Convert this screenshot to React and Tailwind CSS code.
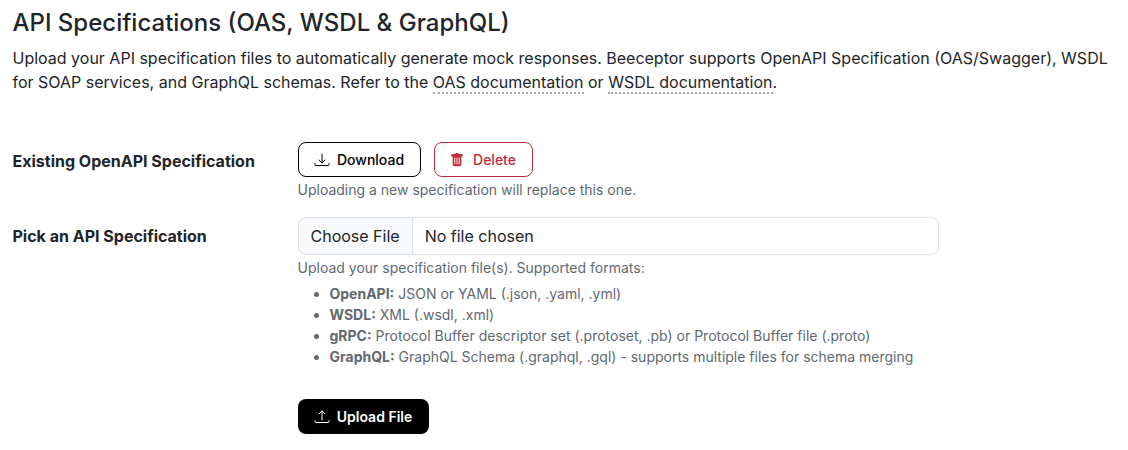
import React from "react";

function DownloadIcon() {
  return (
    <svg width="16" height="16" viewBox="0 0 16 16" fill="none" stroke="currentColor" strokeWidth="1" strokeLinecap="round" strokeLinejoin="round">
      <path d="M8 2v9M5 8l3 3 3-3" />
      <path d="M1 11.5v1a1 1 0 0 0 1 1h12a1 1 0 0 0 1-1v-1" />
    </svg>
  );
}

function UploadIcon() {
  return (
    <svg width="16" height="16" viewBox="0 0 16 16" fill="none" stroke="currentColor" strokeWidth="1" strokeLinecap="round" strokeLinejoin="round">
      <path d="M8 11V2M5 5l3-3 3 3" />
      <path d="M1 11.5v1a1 1 0 0 0 1 1h12a1 1 0 0 0 1-1v-1" />
    </svg>
  );
}

function TrashIcon() {
  return (
    <svg width="14" height="14" viewBox="0 0 16 16" fill="currentColor">
      <path d="M2.5 1a1 1 0 0 0-1 1v1a1 1 0 0 0 1 1H3v9a2 2 0 0 0 2 2h6a2 2 0 0 0 2-2V4h.5a1 1 0 0 0 1-1V2a1 1 0 0 0-1-1H10a1 1 0 0 0-1-1H7a1 1 0 0 0-1 1H2.5zm3 4a.5.5 0 0 1 .5.5v7a.5.5 0 0 1-1 0v-7a.5.5 0 0 1 .5-.5zM8 5a.5.5 0 0 1 .5.5v7a.5.5 0 0 1-1 0v-7A.5.5 0 0 1 8 5zm3 .5v7a.5.5 0 0 1-1 0v-7a.5.5 0 0 1 1 0z" />
    </svg>
  );
}

export default function App() {
  return (
    <div className="w-[1128px] h-[450px] overflow-hidden bg-white font-['Inter',sans-serif] text-[#212529] pl-[12.5px] pr-[12px]">
      <h2 className="pt-[7px] text-[24px] leading-[32px] font-medium">API Specifications (OAS, WSDL &amp; GraphQL)</h2>
      <p className="mt-[7px] text-[16px] leading-[24px]">
        Upload your API specification files to automatically generate mock responses. Beeceptor supports OpenAPI Specification (OAS/Swagger), WSDL for SOAP services, and GraphQL schemas. Refer to the{" "}
        <span className="border-b-2 border-dotted border-[#a3a8ad]">OAS documentation</span> or{" "}
        <span className="border-b-2 border-dotted border-[#a3a8ad]">WSDL documentation</span>.
      </p>
      <div className="mt-[48px] flex">
        <div className="w-[285px] pt-[9px] text-[16px] leading-[20px] font-bold">Existing OpenAPI Specification</div>
        <div>
          <div className="flex gap-[13px]">
            <button className="h-[35px] w-[123px] rounded-[8px] border border-black flex items-center justify-center gap-[7px] text-[14px] font-medium text-black">
              <DownloadIcon />Download
            </button>
            <button className="h-[35px] w-[99px] rounded-[8px] border border-[#bb2d3b] flex items-center justify-center gap-[9px] text-[14px] font-medium text-[#bb2d3b]">
              <TrashIcon />Delete
            </button>
          </div>
          <div className="mt-[3px] text-[14px] leading-[20px] text-[#62686f]">Uploading a new specification will replace this one.</div>
        </div>
      </div>
      <div className="mt-[17px] flex">
        <div className="w-[285px] pt-[9px] text-[16px] leading-[20px] font-bold">Pick an API Specification</div>
        <div>
          <div className="w-[641px] h-[38px] rounded-[8px] border border-[#dee2e6] flex items-center text-[16px]">
            <span className="h-full px-[12px] bg-[#f8f9fa] border-r border-[#dee2e6] rounded-l-[8px] flex items-center">Choose File</span>
            <span className="pl-[12px]">No file chosen</span>
          </div>
          <div className="mt-[2px] text-[14px] leading-[21px] text-[#62686f]">
            Upload your specification file(s). Supported formats:
            <ul className="list-disc pl-[32px] mt-[5px]">
              <li><b className="font-bold">OpenAPI:</b> JSON or YAML (.json, .yaml, .yml)</li>
              <li><b className="font-bold">WSDL:</b> XML (.wsdl, .xml)</li>
              <li><b className="font-bold">gRPC:</b> Protocol Buffer descriptor set (.protoset, .pb) or Protocol Buffer file (.proto)</li>
              <li><b className="font-bold">GraphQL:</b> GraphQL Schema (.graphql, .gql) - supports multiple files for schema merging</li>
            </ul>
          </div>
          <button className="mt-[32px] h-[35px] w-[131px] rounded-[8px] bg-black text-white flex items-center justify-center gap-[7px] text-[14px] font-semibold">
            <UploadIcon />Upload File
          </button>
        </div>
      </div>
    </div>
  );
}
